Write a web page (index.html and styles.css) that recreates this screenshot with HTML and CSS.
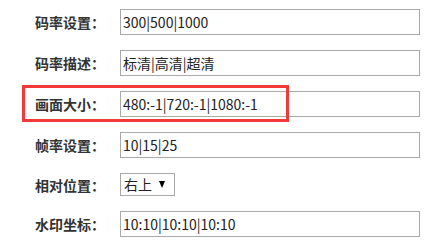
FILE: index.html
```html
<!DOCTYPE html>
<html lang="zh-CN">
<head>
<meta charset="utf-8">
<title>设置</title>
<link rel="stylesheet" href="styles.css">
</head>
<body>
<form class="form">
  <div class="row">
    <label class="label">码率设置<span class="colon">：</span></label>
    <div class="field">300|500|1000</div>
  </div>
  <div class="row">
    <label class="label">码率描述<span class="colon">：</span></label>
    <div class="field">标清|高清|超清</div>
  </div>
  <div class="row">
    <label class="label">画面大小<span class="colon">：</span></label>
    <div class="field">480:-1|720:-1|1080:-1</div>
  </div>
  <div class="row">
    <label class="label">帧率设置<span class="colon">：</span></label>
    <div class="field">10|15|25</div>
  </div>
  <div class="row">
    <label class="label">相对位置<span class="colon">：</span></label>
    <div class="select"><span class="select-text">右上</span><span class="select-arrow"></span></div>
  </div>
  <div class="row">
    <label class="label">水印坐标<span class="colon">：</span></label>
    <div class="field">10:10|10:10|10:10</div>
  </div>
  <div class="highlight"></div>
</form>
</body>
</html>
```
FILE: styles.css
```css
html, body {
  margin: 0;
  padding: 0;
  background: #ffffff;
}
body {
  font-family: "Noto Sans CJK SC", "Noto Sans", sans-serif;
  font-size: 14px;
  color: #333333;
}
.form {
  position: relative;
  padding-top: 2px;
}
.row {
  display: flex;
  align-items: center;
  padding: 7px 0 8px;
}
.label {
  width: 120px;
  box-sizing: border-box;
  padding-left: 35px;
  font-weight: bold;
  color: #333333;
  white-space: nowrap;
  line-height: 20px;
}
.colon {
  font-family: "Noto Sans CJK TC", "Noto Sans CJK SC", sans-serif;
}
.field {
  width: 300px;
  height: 26px;
  box-sizing: border-box;
  border: 1px solid #a9a9a9;
  padding: 0 2px;
  line-height: 24px;
  color: #222222;
  white-space: nowrap;
  overflow: hidden;
}
.select {
  width: 55px;
  height: 23px;
  box-sizing: border-box;
  border: 1px solid #a9a9a9;
  display: flex;
  align-items: center;
  padding-left: 3px;
  color: #222222;
  line-height: 21px;
}
.select-text {
  flex: 1;
}
.select-arrow {
  width: 0;
  height: 0;
  border-left: 3.5px solid transparent;
  border-right: 3.5px solid transparent;
  border-top: 7px solid #000000;
  margin-right: 9px;
}
.highlight {
  position: absolute;
  left: 22px;
  top: 85px;
  width: 267px;
  height: 37px;
  box-sizing: border-box;
  border: 3px solid #f23a3a;
  pointer-events: none;
}
```
